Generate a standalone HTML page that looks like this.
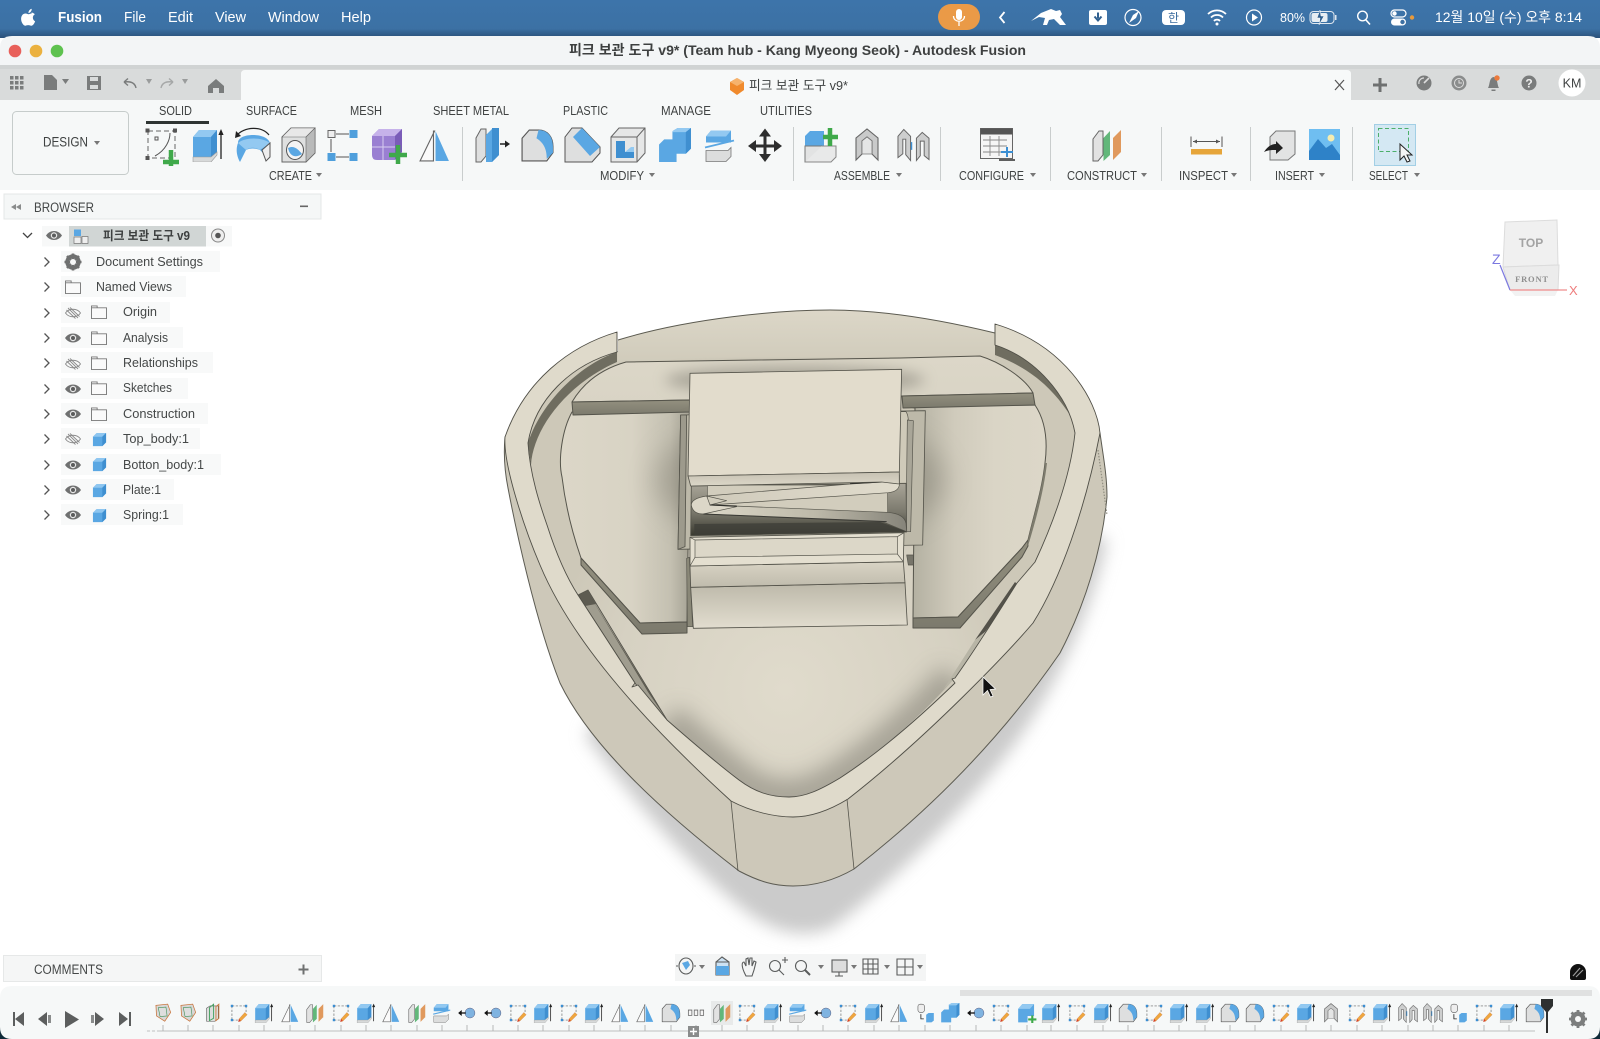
<!DOCTYPE html>
<html lang="ko"><head><meta charset="utf-8"><title>Autodesk Fusion</title>
<style>
html,body{margin:0;padding:0;background:#fff;width:1600px;height:1039px;overflow:hidden}
svg{display:block;filter:blur(.35px)}
text{font-family:"Liberation Sans","Noto Sans CJK KR",sans-serif;fill:#3f4242;font-size:12px}
.m{fill:#fff;font-size:14.5px}
.tab,.lab{font-size:12.5px}
.tr{font-size:12.5px;fill:#454848}
</style></head><body>
<svg width="1600" height="1039" viewBox="0 0 1600 1039" xmlns="http://www.w3.org/2000/svg">
<defs>
<linearGradient id="mb" x1="0" y1="0" x2="0" y2="1"><stop offset="0" stop-color="#3d74aa"/><stop offset=".75" stop-color="#3c71a4"/><stop offset="1" stop-color="#2a5079"/></linearGradient>
<linearGradient id="plL" gradientUnits="userSpaceOnUse" x1="560" y1="0" x2="690" y2="0"><stop offset="0" stop-color="#dcd7c8"/><stop offset=".55" stop-color="#d8d3c4"/><stop offset=".85" stop-color="#c4c0b1"/><stop offset="1" stop-color="#a5a294"/></linearGradient>
<linearGradient id="plR" gradientUnits="userSpaceOnUse" x1="915" y1="0" x2="1048" y2="0"><stop offset="0" stop-color="#b5b2a3"/><stop offset=".3" stop-color="#d0cbbc"/><stop offset=".6" stop-color="#dad5c6"/><stop offset="1" stop-color="#dcd7c8"/></linearGradient>
<linearGradient id="plT" x1="0" y1="0" x2="0" y2="1"><stop offset="0" stop-color="#dcd7c8"/><stop offset="1" stop-color="#d9d4c5"/></linearGradient>
<linearGradient id="lip" x1="0" y1="0" x2="0" y2="1"><stop offset="0" stop-color="#93907f"/><stop offset="1" stop-color="#7c7a6d"/></linearGradient>
<linearGradient id="bw" x1="0" y1="0" x2="0" y2="1"><stop offset="0" stop-color="#dcd7c8"/><stop offset="1" stop-color="#d0cbbb"/></linearGradient>
<linearGradient id="front" x1="0" y1="0" x2="0" y2="1"><stop offset="0" stop-color="#c6c1b2"/><stop offset="1" stop-color="#dcd7c8"/></linearGradient>
<linearGradient id="front2" x1="0" y1="0" x2="0" y2="1"><stop offset="0" stop-color="#bcb8a9"/><stop offset="1" stop-color="#e2ddcf"/></linearGradient>
<linearGradient id="front3" x1="0" y1="0" x2="0" y2="1"><stop offset="0" stop-color="#d9d4c5"/><stop offset="1" stop-color="#bfbbac"/></linearGradient>
<linearGradient id="dk" x1="0" y1="0" x2="0" y2="1"><stop offset="0" stop-color="#aaa699"/><stop offset=".55" stop-color="#7a786c"/><stop offset="1" stop-color="#39392f"/></linearGradient>
<linearGradient id="rib1" x1="0" y1="0" x2="1" y2="0"><stop offset="0" stop-color="#cfcaba"/><stop offset=".5" stop-color="#d9d4c5"/><stop offset="1" stop-color="#e0dbcc"/></linearGradient>
<linearGradient id="rib2" x1="0" y1="0" x2="1" y2="0"><stop offset="0" stop-color="#dcd7c8"/><stop offset=".55" stop-color="#bdb9a9"/><stop offset="1" stop-color="#86847a"/></linearGradient>
<radialGradient id="floor" gradientUnits="userSpaceOnUse" cx="785" cy="690" r="240"><stop offset="0" stop-color="#e0dbcc"/><stop offset=".7" stop-color="#d6d1c2"/><stop offset="1" stop-color="#cdc8b8"/></radialGradient>
<filter id="bS" x="-30%" y="-30%" width="160%" height="160%"><feGaussianBlur stdDeviation="8"/></filter>
<filter id="bA" x="-30%" y="-30%" width="160%" height="160%"><feGaussianBlur stdDeviation="7"/></filter>
<filter id="bF" x="-30%" y="-30%" width="160%" height="160%"><feGaussianBlur stdDeviation="11"/></filter>
<filter id="bB" x="-40%" y="-40%" width="180%" height="180%"><feGaussianBlur stdDeviation="14"/></filter>
<clipPath id="fc"><path d="M617 352L995 345C1035 358 1068 395 1075 433C1070 480 1050 530 1035 562L1017 583C1000 610 975 650 955 678C920 717 880 752 840 778C820 790 805 797 789 797C770 797 755 792 739 780C715 762 690 740 667 720L578 595C565 575 555 550 547 525C540 505 530 475 528 443C535 400 570 365 617 352Z"/></clipPath>

<symbol id="ex" viewBox="0 0 34 34"><path d="M2 9L8 2H26V25L20 31H2Z" fill="#5aa7e3"/><path d="M2 9L8 2H26L20 9Z" fill="#93c9f1"/><path d="M20 9L26 2V25L20 29Z" fill="#3f8fd0"/><path d="M2 29H20L26 24V27L20 34H2Z" fill="#d7d9d9" stroke="#9a9a9a" stroke-width=".6"/><path d="M30 31V5" stroke="#222" stroke-width="1.3"/><path d="M30 1l-2.600 6h5.200z" fill="#222"/></symbol>
<symbol id="sk" viewBox="0 0 34 34"><path d="M5 5H29M5 5V29M5 29H15M29 5V16" fill="none" stroke="#666" stroke-width="1.100" stroke-dasharray="4 2.400"/><rect x="3" y="3" width="4" height="4" fill="#3b8ed2"/><rect x="27" y="3" width="4" height="4" fill="#3b8ed2"/><rect x="3" y="27" width="4" height="4" fill="#3b8ed2"/><path d="M16 32l1-5L27 16l4 4L20 31z" fill="#efa63e" stroke="#a66" stroke-width=".4"/><path d="M16 32l1-5 3 3z" fill="#d83a2c"/></symbol>
<symbol id="tri" viewBox="0 0 34 34"><path d="M17 3L3 32H16V3Z" fill="#fafafa" stroke="#666" stroke-width="1.100"/><path d="M18 3V32H31Z" fill="#5aa7e3"/></symbol>
<symbol id="con" viewBox="0 0 34 34"><path d="M3 11L9 3H13V27L8 33H3Z" fill="#e2e2e2" stroke="#666" stroke-width="1"/><path d="M13.500 10L20 3V27L13.500 33Z" fill="#62b77a"/><path d="M23 10L31 2V24L23 32Z" fill="#e0995d"/></symbol>
<symbol id="fil" viewBox="0 0 34 34"><path d="M2 10L9 2H18C27 2 32 9 32 18V24L26 32H2Z" fill="#dedfdf" stroke="#555" stroke-width="1.100"/><path d="M18 2C27 2 32 9 32 18V24L26 30C26 22 24 15 16 10Z" fill="#5aa7e3"/></symbol>
<symbol id="jt" viewBox="0 0 34 34"><circle cx="22" cy="17" r="8.500" fill="#7fb3e0" stroke="#557" stroke-width=".8"/><path d="M15 17H6" stroke="#111" stroke-width="2.200"/><path d="M2 17l6-5v10z" fill="#111"/></symbol>
<symbol id="spl" viewBox="0 0 34 34"><path d="M3 8L8 2H28V14H3Z" fill="#5aa7e3"/><path d="M3 8L8 2H28L23 8Z" fill="#93c9f1"/><path d="M2 19L31 12" stroke="#5aa7e3" stroke-width="1.800"/><path d="M3 22H25L28 19V28L23 33H3Z" fill="#dcdddd" stroke="#777" stroke-width=".8"/></symbol>
<symbol id="cmb" viewBox="0 0 34 34"><path d="M2 16L7 11H15V3L20 0H33V20L28 25H19V33H2Z" fill="#5aa7e3"/><path d="M15 3L20 0H33L28 4H15Z" fill="#93c9f1"/><path d="M28 4L33 0V20L28 25Z" fill="#3f8fd0"/></symbol>
<symbol id="asm" viewBox="0 0 34 34"><path d="M6 32V10L17 1L28 10V32L22 26V13L17 9L12 13V26Z" fill="#c9caca" stroke="#666" stroke-width="1.100"/><path d="M12 13L17 9L22 13V26L12 26Z" fill="#e4e5e5" stroke="#777" stroke-width=".8"/></symbol>
<symbol id="asm2" viewBox="0 0 34 34"><path d="M1 30V8L7 1L14 8V33L9 27V11H6V26Z" fill="#cdcece" stroke="#666"/><path d="M33 32V10L26 4L20 10V33L24 28V13H28V28Z" fill="#cdcece" stroke="#666"/><path d="M15 14V22" stroke="#3b8ed2" stroke-width="1.400"/></symbol>
<symbol id="seq" viewBox="0 0 34 34"><rect x="5" y="2" width="11" height="14" rx="4" fill="#eee" stroke="#555"/><path d="M10 19V27H15" fill="none" stroke="#222" stroke-width="1.400"/><path d="M19 20L23 17H32V30L28 33H19Z" fill="#5aa7e3"/></symbol>
<symbol id="new" viewBox="0 0 34 34"><path d="M2 10L9 2H29V22H18V33H2Z" fill="#5aa7e3"/><path d="M2 10L9 2H29L22 10Z" fill="#93c9f1"/><path d="M19 28H33M26 21V34" stroke="#3fa94a" stroke-width="3.600"/></symbol>
<symbol id="c1" viewBox="0 0 34 34"><path d="M5 4L25 2L30 16L20 31L6 22Z" fill="#d8d8d8" stroke="#c9763e" stroke-width="1.300"/><path d="M9 8L22 7L24 22L12 23Z" fill="#dedede" stroke="#3f8f55"/></symbol>
<symbol id="c2" viewBox="0 0 34 34"><path d="M6 9L12 5H26V27L20 31H6Z" fill="#ddd" stroke="#555"/><path d="M11 30V8L18 2V26Z" fill="none" stroke="#3f9f5b" stroke-width="1.500"/><path d="M22 30V6L27 2V26Z" fill="none" stroke="#d07a3c" stroke-width="1.500"/></symbol>
<symbol id="ddd" viewBox="0 0 34 34"><path d="M4 12h6v9H4zM14 12h6v9h-6zM24 12h6v9h-6z" fill="#f5f5f5" stroke="#666" stroke-width="1.300"/></symbol>
<symbol id="eye" viewBox="0 0 16 10"><path d="M0 5C4-1 12-1 16 5C12 11 4 11 0 5Z" fill="#6f7070"/><circle cx="8" cy="5" r="3.200" fill="#e8e8e8"/><circle cx="8" cy="5" r="2" fill="#5b5c5c"/></symbol>
<symbol id="eyx" viewBox="0 0 16 12"><path d="M.5 6C4 1 12 1 15.500 6C12 11 4 11 .5 6Z" fill="none" stroke="#8a8a8a" stroke-width=".9"/><path d="M3 1L13 11M1.500 3L10.500 11.500M5 .5L14.500 9.500" stroke="#8a8a8a" stroke-width=".9"/></symbol>
<symbol id="fol" viewBox="0 0 17 15"><path d="M.5 1H6.500V3H16.500V14.500H.5ZM.5 3H6.500" fill="#fafafa" stroke="#777" stroke-width="1"/></symbol>
<symbol id="cub" viewBox="0 0 16 16"><path d="M1 5L5 1H15V11L11 15H1Z" fill="#5aa7e3"/><path d="M1 5L5 1H15L11 5Z" fill="#8ec6f0"/><path d="M11 5L15 1V11L11 15Z" fill="#3f8fd0"/></symbol>
<symbol id="chv" viewBox="0 0 8 12"><path d="M1.500 1.500L6 6L1.500 10.500" fill="none" stroke="#555" stroke-width="1.300"/></symbol>
</defs>

<rect width="1600" height="1039" fill="#fff"/>

<!-- macOS menu bar -->
<rect width="1600" height="38" fill="url(#mb)"/>
<path d="M31.600 13.500c-1.200 0-2.200.7-3 .7s-1.900-.7-3.100-.7c-2.300 0-4.400 2-4.400 5.400 0 3.300 2.300 6.800 4.100 6.800.9 0 1.500-.6 3-.6s2 .6 3.100.6c1.800 0 3.400-3 3.800-4.500-2.900-1.200-3-5.600-.2-6.900-.7-.5-1.900-1.800-3.300-1.800zM28.400 13c.1-2 1.500-3.800 3.300-4.200.2 2.200-1.400 4.200-3.300 4.200z" fill="#fff"/>
<text class="m" x="58" y="22" font-weight="700" textLength="44" lengthAdjust="spacingAndGlyphs">Fusion</text>
<text class="m" x="124" y="22" textLength="22" lengthAdjust="spacingAndGlyphs">File</text>
<text class="m" x="168" y="22" textLength="25" lengthAdjust="spacingAndGlyphs">Edit</text>
<text class="m" x="215" y="22" textLength="31" lengthAdjust="spacingAndGlyphs">View</text>
<text class="m" x="268" y="22" textLength="51" lengthAdjust="spacingAndGlyphs">Window</text>
<text class="m" x="341" y="22" textLength="30" lengthAdjust="spacingAndGlyphs">Help</text>
<rect x="938" y="4" width="42" height="26" rx="13" fill="#ea9a47"/>
<rect x="956" y="9" width="6" height="11" rx="3" fill="#fff"/><path d="M953.500 16c0 7 11 7 11 0M959 21.500V26" fill="none" stroke="#fff" stroke-width="1.300"/>
<path d="M1004.500 12L1000 17.500L1004.500 23" fill="none" stroke="#fff" stroke-width="1.800"/>
<path d="M1031 21L1041 13L1051 9L1056 11L1060 10L1062 14L1060 17L1066 25L1060 25L1054 19L1049 20L1047 25L1043 25L1045 18L1039 17Z" fill="#fff"/>
<rect x="1089" y="10" width="18" height="15" rx="2" fill="#fff"/><path d="M1098 12.500v6M1094.500 16.500L1098 20.500L1101.500 16.500" fill="none" stroke="#2f5f8f" stroke-width="2"/>
<circle cx="1133" cy="17.500" r="8" fill="none" stroke="#fff" stroke-width="1.200"/><path d="M1129 23L1133 15L1139 11L1136 18Z" fill="#fff"/>
<rect x="1162" y="10" width="23" height="15" rx="4" fill="#fff"/><text x="1173.500" y="22" text-anchor="middle" style="fill:#3d6d9f;font-size:12px">한</text>
<path d="M1208 14a13 13 0 0 1 18 0M1211 17.500a8.500 8.500 0 0 1 12 0M1214 21a4 4 0 0 1 6 0" fill="none" stroke="#fff" stroke-width="1.800"/><circle cx="1217" cy="24" r="1.500" fill="#fff"/>
<circle cx="1254" cy="17.500" r="7.500" fill="none" stroke="#fff" stroke-width="1.200"/><path d="M1252 13.500L1258 17.500L1252 21.500Z" fill="#fff"/>
<text class="m" x="1280" y="22" style="font-size:13px" textLength="25" lengthAdjust="spacingAndGlyphs">80%</text>
<rect x="1310" y="11.500" width="24" height="12" rx="3.500" fill="none" stroke="#dfe7ef" stroke-width="1"/><rect x="1311.500" y="13" width="16" height="9" rx="2" fill="#e6edf3"/><rect x="1335" y="15" width="1.500" height="5" fill="#dfe7ef"/><path d="M1320 10L1317 18H1320L1319 25L1324 16H1321Z" fill="#2f5f8f" stroke="#fff" stroke-width=".5"/>
<circle cx="1362.500" cy="16" r="4.800" fill="none" stroke="#fff" stroke-width="1.400"/><path d="M1366 20L1370 24.500" stroke="#fff" stroke-width="1.600"/>
<rect x="1391" y="10" width="15" height="7" rx="3.500" fill="none" stroke="#fff" stroke-width="1.200"/><circle cx="1394.500" cy="13.500" r="2.200" fill="#fff"/><rect x="1391" y="18.500" width="15" height="7" rx="3.500" fill="#fff"/><circle cx="1402.500" cy="22" r="2.200" fill="#3d70a3"/><circle cx="1412" cy="17.500" r="2.200" fill="#e89a3c"/>
<text class="m" x="1435" y="22" style="font-size:14px" textLength="147" lengthAdjust="spacingAndGlyphs">12월 10일 (수) 오후 8:14</text>

<!-- window chrome -->
<path d="M0 48Q0 36 12 36H1588Q1600 36 1600 48V190H0Z" fill="#f3f5f6"/>
<circle cx="15" cy="51" r="6.300" fill="#e8605a"/><circle cx="36" cy="51" r="6.300" fill="#ebb13f"/><circle cx="57" cy="51" r="6.300" fill="#5ec24f"/>
<text x="569" y="55" font-weight="700" style="font-size:14px;fill:#3e4040" textLength="457" lengthAdjust="spacingAndGlyphs">피크 보관 도구 v9* (Team hub - Kang Myeong Seok) - Autodesk Fusion</text>
<rect y="65" width="1600" height="4" fill="#d0d3d3"/>
<rect y="69" width="1600" height="31" fill="#d9dbdb"/>
<path d="M241 100V74Q241 70 245 70H1347Q1351 70 1351 74V100Z" fill="#f7f9f9"/>
<rect y="100" width="1600" height="90" fill="#f6f8f8"/>

<!-- tab row left icons -->
<g fill="#7a7c7c"><rect x="10" y="76" width="3.500" height="3.500"/><rect x="15" y="76" width="3.500" height="3.500"/><rect x="20" y="76" width="3.500" height="3.500"/><rect x="10" y="81" width="3.500" height="3.500"/><rect x="15" y="81" width="3.500" height="3.500"/><rect x="20" y="81" width="3.500" height="3.500"/><rect x="10" y="86" width="3.500" height="3.500"/><rect x="15" y="86" width="3.500" height="3.500"/><rect x="20" y="86" width="3.500" height="3.500"/>
<path d="M44 75H52L57 80V90H44Z"/><path d="M62 79h7l-3.500 5z"/>
<path d="M87 76H101V90H87ZM90 77V81H98V77ZM90 85V89H98V85Z" fill-rule="evenodd"/>
<path d="M146 79h6l-3 5zM182 79h6l-3 5z" fill="#9a9c9c"/>
<path d="M208 86L216 79L224 86V93H219V88H213V93H208Z"/></g>
<path d="M136 88C135 83 131 81 124 82M124 82l4-3.500M124 82l4 3.500" fill="none" stroke="#7a7c7c" stroke-width="1.400"/>
<path d="M161 88C162 83 166 81 173 82M173 82l-4-3.500M173 82l-4 3.500" fill="none" stroke="#a6a8a8" stroke-width="1.400"/>

<path d="M730 82L737 78L744 82V90L737 95L730 90Z" fill="#f08a2c"/><path d="M730 82L737 78L744 82L737 86Z" fill="#f6b36d"/>
<text x="749" y="90" style="font-size:13px" textLength="99" lengthAdjust="spacingAndGlyphs">피크 보관 도구 v9*</text>
<path d="M1335 80L1344 90M1344 80L1335 90" stroke="#555" stroke-width="1.200"/>
<path d="M1380 78V92M1373 85H1387" stroke="#6e7070" stroke-width="3"/>
<circle cx="1424" cy="83" r="7.500" fill="#7a7c7c"/><path d="M1424 83L1429 78" stroke="#ddd" stroke-width="1.600"/><path d="M1419 84a5 5 0 0 1 5-6" fill="none" stroke="#ddd" stroke-width="1.200"/>
<circle cx="1459" cy="83" r="7.500" fill="#8a8c8c"/><circle cx="1459" cy="83" r="4.500" fill="none" stroke="#ddd"/><path d="M1459 80V83H1462" stroke="#ddd" fill="none"/>
<path d="M1488 88C1490 85 1489 78 1493.500 77C1498 78 1497 85 1499 88ZM1491.500 89.500H1495.500V91H1491.500Z" fill="#7a7c7c"/><circle cx="1497" cy="78" r="2.700" fill="#ec7a3c"/>
<circle cx="1529" cy="83" r="7.500" fill="#7a7c7c"/><text x="1529" y="87.500" text-anchor="middle" font-weight="700" style="fill:#eee;font-size:12px">?</text>
<circle cx="1572" cy="83" r="13.500" fill="#fff"/><text x="1572" y="87.500" text-anchor="middle" style="font-size:12.500px">KM</text>

<!-- ribbon tabs -->
<text class="tab" x="159" y="115" textLength="33" lengthAdjust="spacingAndGlyphs">SOLID</text>
<text class="tab" x="246" y="115" textLength="51" lengthAdjust="spacingAndGlyphs">SURFACE</text>
<text class="tab" x="350" y="115" textLength="32" lengthAdjust="spacingAndGlyphs">MESH</text>
<text class="tab" x="433" y="115" textLength="76" lengthAdjust="spacingAndGlyphs">SHEET METAL</text>
<text class="tab" x="563" y="115" textLength="45" lengthAdjust="spacingAndGlyphs">PLASTIC</text>
<text class="tab" x="661" y="115" textLength="50" lengthAdjust="spacingAndGlyphs">MANAGE</text>
<text class="tab" x="760" y="115" textLength="52" lengthAdjust="spacingAndGlyphs">UTILITIES</text>
<rect x="146" y="121" width="63" height="3" fill="#2f3533"/>

<rect x="12.500" y="111.500" width="116" height="63" rx="4" fill="#f6f8f8" stroke="#c6cccb"/>
<text x="43" y="146.500" style="font-size:13.500px" textLength="45" lengthAdjust="spacingAndGlyphs">DESIGN</text>
<path d="M94 141h6l-3 4z" fill="#777"/>

<!-- ribbon icons -->
<g>
<path d="M148 131H175V158H148Z" fill="none" stroke="#666" stroke-dasharray="5 3"/><path d="M155 156C166 150 170 140 170 133" fill="none" stroke="#555"/><g fill="#555"><rect x="145.500" y="128.500" width="4" height="4"/><rect x="173" y="128.500" width="4" height="4"/><rect x="145.500" y="156" width="4" height="4"/></g><rect x="155" y="137" width="3" height="3" fill="none" stroke="#555"/><path d="M163 162H179M171 150V166" stroke="#3fa94a" stroke-width="4.500"/>
<use href="#ex" x="191" y="128" width="34" height="34"/>
<path d="M238 143C238 137 246 135 253 135C260 135 268 137 270 143L268 158L260 150C255 148 250 148 246 150L240 162C236 155 236 148 238 143Z" fill="#5aa7e3"/><path d="M238 143C245 137 262 137 270 143L260 150C255 147 250 147 246 150Z" fill="#93c9f1"/><path d="M262 150L270 143V157L266 161Z" fill="#eee" stroke="#555"/><path d="M236 136C245 126 262 126 269 135" fill="none" stroke="#222" stroke-width="1.200"/><path d="M236 131l-1 7 6-2z" fill="#222"/>
<path d="M282 137L291 128H315V153L306 162H282Z" fill="#dfe0e0" stroke="#666"/><path d="M282 137L291 128H315L306 137Z" fill="#e8e8e8" stroke="#666" stroke-width=".6"/><path d="M306 137L315 128V153L306 162Z" fill="#b9baba" stroke="#666" stroke-width=".6"/><ellipse cx="295" cy="150" rx="8.500" ry="9.500" fill="#f4f4f4" stroke="#555"/><path d="M288 148C290 157 296 158 302 154C298 149 294 145 288 148Z" fill="#5aa7e3"/>
<rect x="328" y="130.500" width="7" height="7" fill="#eee" stroke="#666"/><rect x="349.500" y="130" width="8" height="8" fill="#4f9fdc"/><rect x="327.500" y="153" width="8" height="8" fill="#4f9fdc"/><rect x="349.500" y="153" width="8" height="8" fill="#4f9fdc"/><path d="M336 134H349M331 139V152M336 157H349" stroke="#555"/>
<path d="M372 136L379 129H402V152L395 160H377Q372 160 372 155Z" fill="#9a7fd2"/><path d="M372 136L379 129H402L395 136Z" fill="#c6b2ea"/><path d="M395 136L402 129V152L395 160Z" fill="#7a5cb8"/><path d="M383 136V160M372 147H395" stroke="#d8ccf0" stroke-width="1"/><path d="M389 155H407M398 145V164" stroke="#3fa94a" stroke-width="4.500"/>
<use href="#tri" x="417" y="128" width="35" height="35"/>
<path d="M476 138L481 129H486V156L481 162H476Z" fill="#dedfdf" stroke="#666"/><path d="M486 135L493 128H499V155L492 162H486Z" fill="#5aa7e3"/><path d="M492 128H499V155L492 162Z" fill="#3f8fd0"/><path d="M500 144H506" stroke="#222" stroke-width="1.500"/><path d="M510 144l-5-3.500v7z" fill="#222"/>
<use href="#fil" x="520" y="128" width="35" height="35"/>
<path d="M565 137L572 128H582L600 147V153L592 162H565Z" fill="#dedfdf" stroke="#555" stroke-width="1"/><path d="M582 128L600 147L590 156L573 137Z" fill="#5aa7e3"/>
<path d="M611 137L619 128H645V153L637 162H611Z" fill="#e6e7e7" stroke="#666"/><path d="M611 137H637L645 128M637 137V162" fill="none" stroke="#666"/><path d="M616 141H625V152H634V158H616Z" fill="#3f8fd0"/><path d="M625 152L631 147H634V152Z" fill="#93c9f1"/>
<use href="#cmb" x="657" y="128" width="35" height="35"/>
<use href="#spl" x="703" y="128" width="34" height="35"/>
<path d="M765 132V160M751 146H779" stroke="#2e2e2e" stroke-width="3"/><path d="M765 128.500l-6 8h12zM765 162l-6-8h12zM748 146l8-6v12zM782 146l-8-6v12z" fill="#2e2e2e"/>
<path d="M805 136L810 131H824V162H805Z" fill="#5aa7e3"/><path d="M805 146H822V162H805Z" fill="#e2e3e3" stroke="#777"/><path d="M822 146H836V157L831 162H805" fill="#e8e9e9" stroke="#888"/><path d="M823 137H838M830 128V146" stroke="#3fa94a" stroke-width="4.500"/>
<use href="#asm" x="850" y="128" width="34" height="34"/>
<use href="#asm2" x="897" y="128" width="33" height="34"/>
<rect x="980.500" y="128.500" width="32" height="30" fill="#f5f5f5" stroke="#666"/><rect x="980.500" y="128.500" width="32" height="6" fill="#555"/><path d="M983 140H1007M983 146H1007M983 152H1004M990 136V156M999 136V156" stroke="#888" stroke-width=".9"/><path d="M1001 152H1013M1007 147V157" stroke="#3b8ed2" stroke-width="2"/><path d="M999 160H1015" stroke="#444" stroke-width="1.700"/>
<use href="#con" x="1090" y="128" width="34" height="34"/>
<rect x="1191" y="149" width="31" height="5.500" fill="#e6a53a"/><path d="M1191 136.500V147M1222 136.500V147M1193 141.500H1220" stroke="#555" stroke-width="1"/><path d="M1193 141.500l4-2v4zM1220 141.500l-4-2v4z" fill="#555"/>
<path d="M1270 137L1276 131H1295V154L1288 160H1270Z" fill="#e2e3e3" stroke="#777"/><path d="M1264 152C1268 146 1272 144 1276 144V141L1283 148L1276 154V150C1272 150 1268 150 1264 152Z" fill="#222"/>
<rect x="1309" y="129" width="31" height="31" fill="#6fbef1"/><path d="M1309 160V151L1318 139L1326 148L1332 144L1340 155V160Z" fill="#2e82c8"/><circle cx="1331" cy="138" r="3.500" fill="#f5ecb0"/>
<rect x="1374.500" y="124.500" width="41" height="41" fill="#d4e8f3" stroke="#a2cfe5"/><rect x="1378.500" y="128.500" width="30" height="23" fill="none" stroke="#4caf6a" stroke-dasharray="4 2.500"/><path d="M1400 144V160L1404 156L1407 162L1410 161L1407 155L1412 155Z" fill="#f5f5f5" stroke="#222"/>
</g>

<!-- group labels & separators -->
<g>
<text class="lab" x="269" y="180" textLength="43" lengthAdjust="spacingAndGlyphs">CREATE</text><path d="M316 173h6l-3 4z" fill="#777"/>
<text class="lab" x="600" y="180" textLength="44" lengthAdjust="spacingAndGlyphs">MODIFY</text><path d="M649 173h6l-3 4z" fill="#777"/>
<text class="lab" x="834" y="180" textLength="56" lengthAdjust="spacingAndGlyphs">ASSEMBLE</text><path d="M896 173h6l-3 4z" fill="#777"/>
<text class="lab" x="959" y="180" textLength="65" lengthAdjust="spacingAndGlyphs">CONFIGURE</text><path d="M1030 173h6l-3 4z" fill="#777"/>
<text class="lab" x="1067" y="180" textLength="70" lengthAdjust="spacingAndGlyphs">CONSTRUCT</text><path d="M1141 173h6l-3 4z" fill="#777"/>
<text class="lab" x="1179" y="180" textLength="49" lengthAdjust="spacingAndGlyphs">INSPECT</text><path d="M1231 173h6l-3 4z" fill="#777"/>
<text class="lab" x="1275" y="180" textLength="39" lengthAdjust="spacingAndGlyphs">INSERT</text><path d="M1319 173h6l-3 4z" fill="#777"/>
<text class="lab" x="1369" y="180" textLength="39" lengthAdjust="spacingAndGlyphs">SELECT</text><path d="M1414 173h6l-3 4z" fill="#777"/>
<path d="M462.500 127V181M793.500 127V181M940.500 127V181M1050.500 127V181M1161.500 127V181M1250.500 127V181M1352.500 127V181" stroke="#c9cdcd"/>
</g>

<!-- browser -->
<rect x="4" y="194" width="317" height="25" fill="#f5f7f7" stroke="#e4e7e7"/>
<path d="M11 207l5-3v6zM16 207l5-3v6z" fill="#8a8c8c"/>
<text x="34" y="212" style="font-size:13.500px;fill:#454848" textLength="60" lengthAdjust="spacingAndGlyphs">BROWSER</text>
<rect x="300" y="205.500" width="8" height="1.600" fill="#666"/>

<rect x="42" y="226" width="190" height="20.500" fill="#f7f8f8"/>
<rect x="69" y="226" width="137" height="20.500" fill="#d1d6d5"/>
<path d="M23 233L27.500 237.500L32 233" fill="none" stroke="#444" stroke-width="1.300"/>
<use href="#eye" x="46" y="230.500" width="16" height="10"/>
<path d="M74 229.500H81V236H74Z" fill="#5aa7e3"/><path d="M74 237H81V243.500H74Z" fill="#eee" stroke="#777" stroke-width=".7"/><path d="M82 236.500H88V243.500H82Z" fill="#eee" stroke="#777" stroke-width=".7"/>
<text x="103" y="240" font-weight="700" style="font-size:12.500px;fill:#3d4040" textLength="87" lengthAdjust="spacingAndGlyphs">피크 보관 도구 v9</text>
<circle cx="218" cy="235.500" r="6.500" fill="#eee" stroke="#888"/><circle cx="218" cy="235.500" r="2.800" fill="#555"/>

<g fill="#f8f9f9">
<rect x="61" y="251" width="159" height="21"/><rect x="61" y="276" width="125" height="21"/><rect x="61" y="302" width="109" height="21"/><rect x="61" y="327" width="122" height="21"/><rect x="61" y="352" width="152" height="21"/><rect x="61" y="378" width="127" height="21"/><rect x="61" y="403" width="147" height="21"/><rect x="61" y="428" width="139" height="21"/><rect x="61" y="454" width="160" height="21"/><rect x="61" y="479" width="113" height="21"/><rect x="61" y="504" width="122" height="21"/>
</g>
<g>
<use href="#chv" x="43" y="256" width="8" height="12"/><use href="#chv" x="43" y="281" width="8" height="12"/><use href="#chv" x="43" y="307" width="8" height="12"/><use href="#chv" x="43" y="332" width="8" height="12"/><use href="#chv" x="43" y="357" width="8" height="12"/><use href="#chv" x="43" y="383" width="8" height="12"/><use href="#chv" x="43" y="408" width="8" height="12"/><use href="#chv" x="43" y="433" width="8" height="12"/><use href="#chv" x="43" y="459" width="8" height="12"/><use href="#chv" x="43" y="484" width="8" height="12"/><use href="#chv" x="43" y="509" width="8" height="12"/>
</g>
<circle cx="73" cy="262" r="5.800" fill="none" stroke="#6f7070" stroke-width="3.800"/><path d="M73 253.500V270.500M64.500 262H81.500M67 256L79 268M79 256L67 268" stroke="#6f7070" stroke-width="2.600"/><circle cx="73" cy="262" r="3" fill="#f8f9f9"/>
<use href="#fol" x="65" y="280" width="16" height="14"/>
<use href="#eyx" x="65" y="307" width="16" height="12"/><use href="#eye" x="65" y="333" width="16" height="10"/><use href="#eyx" x="65" y="358" width="16" height="12"/><use href="#eye" x="65" y="384" width="16" height="10"/><use href="#eye" x="65" y="409" width="16" height="10"/><use href="#eyx" x="65" y="433" width="16" height="12"/><use href="#eye" x="65" y="460" width="16" height="10"/><use href="#eye" x="65" y="485" width="16" height="10"/><use href="#eye" x="65" y="510" width="16" height="10"/>
<use href="#fol" x="91" y="305" width="16" height="14"/><use href="#fol" x="91" y="331" width="16" height="14"/><use href="#fol" x="91" y="356" width="16" height="14"/><use href="#fol" x="91" y="381" width="16" height="14"/><use href="#fol" x="91" y="407" width="16" height="14"/>
<use href="#cub" x="92" y="432" width="15" height="15"/><use href="#cub" x="92" y="457" width="15" height="15"/><use href="#cub" x="92" y="483" width="15" height="15"/><use href="#cub" x="92" y="508" width="15" height="15"/>
<text class="tr" x="96" y="266" textLength="107" lengthAdjust="spacingAndGlyphs">Document Settings</text>
<text class="tr" x="96" y="291" textLength="76" lengthAdjust="spacingAndGlyphs">Named Views</text>
<text class="tr" x="123" y="316" textLength="34" lengthAdjust="spacingAndGlyphs">Origin</text>
<text class="tr" x="123" y="342" textLength="45" lengthAdjust="spacingAndGlyphs">Analysis</text>
<text class="tr" x="123" y="367" textLength="75" lengthAdjust="spacingAndGlyphs">Relationships</text>
<text class="tr" x="123" y="392" textLength="49" lengthAdjust="spacingAndGlyphs">Sketches</text>
<text class="tr" x="123" y="418" textLength="72" lengthAdjust="spacingAndGlyphs">Construction</text>
<text class="tr" x="123" y="443" textLength="66" lengthAdjust="spacingAndGlyphs">Top_body:1</text>
<text class="tr" x="123" y="469" textLength="81" lengthAdjust="spacingAndGlyphs">Botton_body:1</text>
<text class="tr" x="123" y="494" textLength="38" lengthAdjust="spacingAndGlyphs">Plate:1</text>
<text class="tr" x="123" y="519" textLength="46" lengthAdjust="spacingAndGlyphs">Spring:1</text>

<!-- viewcube -->
<g>
<path d="M1505 222L1557 220L1558 265L1503 267Z" fill="#f0f0f0" stroke="#dcdcdc"/>
<path d="M1503 267L1559 265L1558 290L1510 290Z" fill="#ececec" stroke="#dcdcdc"/>
<path d="M1510 290L1558 290L1555 296L1515 296Z" fill="#e5e5e5" opacity=".5"/>
<text x="1531" y="247" text-anchor="middle" font-weight="700" style="font-size:12px;fill:#a3a3a3">TOP</text>
<text x="1532" y="282" text-anchor="middle" font-weight="700" style="font-family:'Liberation Serif',serif;font-size:8.500px;fill:#8f8f8f;letter-spacing:.8px">FRONT</text>
<path d="M1500 265L1510 290" stroke="#7b78e0" stroke-width="1.200"/><path d="M1510 290H1567" stroke="#ef8d8d" stroke-width="1.200"/>
<text x="1492" y="264" style="font-size:14px;fill:#7b78e0">Z</text><text x="1569" y="295" style="font-size:13px;fill:#ee7d7d">X</text>
</g>

<!-- 3D model -->
<g stroke-linejoin="round">
<!-- shadow -->
<path d="M1107 540C1095 600 1062 680 1012 748C960 815 890 885 832 928C800 940 770 932 738 905C690 865 640 810 585 735L700 600L1000 500Z" fill="#cbcbcb" filter="url(#bS)"/>
<!-- outer wall -->
<path d="M505 437C503 460 506 478 508 488C515 525 535 620 560 683C590 745 660 810 739 871C760 882 775 886 793 886C815 886 835 880 854 869C930 810 1000 740 1060 653C1085 605 1102 550 1107 497C1107 475 1103 455 1100 433L995 345L617 352Z" fill="#cdc8b9" stroke="#5c5b52" stroke-width="1"/>
<path d="M1098 450L1107 515" stroke="#8f8d80" stroke-width="1.200" stroke-dasharray="1.500 1.500"/>
<!-- floor -->
<path d="M617 352L995 345C1035 358 1068 395 1075 433C1070 480 1050 530 1035 562L1017 583C1000 610 975 650 955 678C920 717 880 752 840 778C820 790 805 797 789 797C770 797 755 792 739 780C715 762 690 740 667 720L578 595C565 575 555 550 547 525C540 505 530 475 528 443C535 400 570 365 617 352Z" fill="url(#floor)"/>
<g clip-path="url(#fc)">
<path d="M667 720C690 740 715 762 739 780C755 792 770 797 789 797C805 797 820 790 840 778C880 752 920 717 955 678" fill="none" stroke="#77756a" stroke-width="36" opacity=".5" filter="url(#bF)"/>
<path d="M700 633H900" stroke="#9a9788" stroke-width="12" opacity=".25" filter="url(#bA)"/>
</g>
<path d="M618 340C690 318 780 310 830 310C890 310 950 322 995 333V362H618Z" fill="url(#bw)"/>
<path d="M618 340C690 318 780 310 830 310C890 310 950 322 995 333" fill="none" stroke="#5b5a50"/>
<!-- channel -->
<path d="M617 352C577 366 540 405 528 443L531 465C533 430 565 385 617 362Z" fill="#6f6d60"/>
<path d="M995 345C1035 358 1068 395 1075 433V423C1057 393 1035 370 995 355Z" fill="#6f6d60"/>
<!-- shelves -->
<path d="M572 412C562 430 558 460 562 477C566 510 573 535 581 558L640 623L687 622L690 410Z" fill="url(#plL)" stroke="#55544b"/>
<path d="M581 558L640 623L687 622V633L642 634L581 565Z" fill="url(#lip)" stroke="#55544b"/>
<path d="M903 406L1035 405C1045 420 1048 440 1045 463C1042 490 1035 510 1028 540L1022 548L958 617L913 618L915 408Z" fill="url(#plR)" stroke="#55544b"/>
<path d="M1028 540L1022 548L958 617L913 618V628L960 628L1022 557L1028 546Z" fill="url(#lip)" stroke="#55544b"/>
<path d="M1045 463C1042 490 1035 510 1028 540V546C1036 520 1044 490 1047 463Z" fill="#7d7b6d"/>
<path d="M572 402C585 380 605 368 626 362L690 361L900 358L980 356C1000 362 1025 378 1033 393L902 396L688 400Z" fill="url(#plT)" stroke="#55544b"/>
<ellipse cx="795" cy="380" rx="130" ry="14" fill="#77756a" opacity=".5" filter="url(#bA)"/>
<path d="M572 402L690 400V412L573 415Z" fill="url(#lip)" stroke="#55544b"/>
<path d="M902 396L1033 393L1035 405L903 408Z" fill="url(#lip)" stroke="#55544b"/>
<ellipse cx="800" cy="480" rx="145" ry="65" fill="#67655a" opacity=".35" filter="url(#bB)"/>
<!-- slots -->
<path d="M578 595L588 590L667 720L640 690L635 683Z" fill="#a09d8f" stroke="#4f4e46" stroke-width=".8"/>
<path d="M578 595L588 590L596 604L585 606Z" fill="#5d5b51"/>
<path d="M590 596L667 720L648 692Z" fill="#5d5b51"/>
<path d="M1015 582L1019 586L985 632L975 640Z" fill="#54524a"/>
<path d="M975 640L985 632L955 678L943 690Z" fill="#b8b5a6"/>
<!-- rim -->
<path d="M617 332C570 346 525 380 505 437C503 465 525 530 540 565C565 625 620 700 731 801C752 812 775 817 793 817C812 817 830 810 848 799C930 735 1010 650 1033 623C1060 580 1085 510 1100 433C1097 400 1065 345 995 324V345C1035 358 1068 395 1075 433C1070 480 1050 530 1035 562L1017 583C1000 610 975 650 955 678L952 679L955 683C920 717 880 752 840 778C820 790 805 797 789 797C770 797 755 792 739 780C715 762 690 740 667 720L638 685L632 687L635 683L578 595C565 575 555 550 547 525C540 505 530 475 528 443C535 400 570 365 617 352Z" fill="#dfdacb" stroke="#4f4e46" stroke-width=".9"/>
<!-- seams -->
<path d="M731 801L738 871M847 799L854 869" stroke="#55544b" stroke-width=".8"/>
</g>

<!-- central block -->
<g transform="translate(650 360) scale(.33333)" stroke-linejoin="round" stroke="#55544b" stroke-width="2.500">
<path d="M92 165L826 152L818 555L84 568Z" fill="#bdb9a9"/>
<path d="M92 165L110 165L105 560L84 568Z" fill="#9d9a8c"/>
<path d="M768 155Q775 165 775 185L768 515L748 515L745 155Z" fill="#cfcab9" stroke-width="2"/>
<path d="M772 180L790 182L782 515L768 515Z" fill="#a9a698" stroke-width="2"/>
<path d="M124 378L768 370L770 516L122 527Z" fill="url(#dk)"/>
<path d="M172 375H713V457H172Z" fill="#d2cdbd" stroke-width="2"/>
<path d="M180 435L710 457Q762 460 768 490L770 515L700 486L160 462Z" fill="url(#rib2)" stroke-width="2"/>
<path d="M170 408Q124 415 124 435Q128 462 160 462L260 440L180 435Z" fill="#dcd7c8" stroke-width="2"/>
<path d="M170 408L600 372L700 366L748 345V375Q745 395 715 398L180 435L230 422Z" fill="url(#rib1)" stroke-width="2"/>
<path d="M180 435L260 438" fill="none" stroke="#2f2f2b" stroke-width="3"/>
<path d="M160 462L710 485" fill="none" stroke="#3a3a35" stroke-width="3"/>
<path d="M600 371L695 366" fill="none" stroke="#2f2f2b" stroke-width="3"/>
<path d="M133 492L690 486L770 515L133 525Z" fill="#3f3e38" opacity=".8" stroke="none"/>
<path d="M120 40L755 28L748 336L114 348Z" fill="#e2dccc"/>
<path d="M114 348L748 336V372L695 366L122 378Z" fill="url(#front)"/>
<path d="M110 595L118 592L128 800H112Z" fill="#8a8878" stroke-width="2"/>
<path d="M770 585H790V615H775Z" fill="#77756a" stroke-width="2"/>
<path d="M122 682L765 668L772 795L130 805Z" fill="url(#front2)"/>
<path d="M120 618L760 605L765 668L122 682Z" fill="url(#front3)"/>
<path d="M120 532L762 518L760 605L120 618Z" fill="#e4dfd0"/>
<path d="M135 540L742 530V582L135 592Z" fill="#dcd7c8" stroke-width="2"/>
<path d="M120 532L135 540M762 518L742 530M135 592L120 618M742 582L760 605" fill="none" stroke-width="2"/>
</g>

<!-- cursor -->
<path d="M983 677V695L987.500 690.500L990.500 697L993 696L990 689.500L995.500 689Z" fill="#111" stroke="#fff" stroke-width=".7"/>

<!-- comments -->
<rect x="3.500" y="955.500" width="318" height="26" fill="#f5f6f6" stroke="#e6e8e8"/>
<text x="34" y="974" style="font-size:13.500px;fill:#454848" textLength="69" lengthAdjust="spacingAndGlyphs">COMMENTS</text>
<path d="M303.500 964.500V974.500M298.500 969.500H308.500" stroke="#6e7070" stroke-width="2"/>

<!-- nav bar -->
<rect x="675" y="954" width="251" height="27" fill="#f4f5f5"/>
<g fill="none" stroke="#5a5c5c" stroke-width="1.100">
<ellipse cx="686" cy="966" rx="7" ry="8"/><path d="M678 966h-2M694 966h2"/>
<path d="M716 962H729V975H716ZM716 962L722 957L729 962" fill="#cde2f3"/>
<path d="M745 974C742 968 741 962 744 962L746 966V959L748 958L749 965L750 958L752 958L752 966L754 961L756 962L754 970L752 976H746Z"/>
<circle cx="775" cy="966" r="5.500"/><path d="M779 970L784 975M782 960H788M785 957V963"/>
<circle cx="801" cy="966" r="5.500"/><path d="M805 970L810 975" stroke-width="2"/>
<rect x="832" y="960" width="15" height="12" fill="#ddd"/><path d="M839 972V976M835 976H843"/>
<path d="M863 959H878V974H863ZM868 959V974M873 959V974M863 964H878M863 969H878"/>
<path d="M897 959H913V975H897ZM897 967H913M905 959V975"/>
</g>
<rect x="716" y="966" width="13" height="9" fill="#5aa7e3"/>
<path d="M682 963L688 961L690 965L686 970Z" fill="#5aa7e3"/>
<g fill="#777"><path d="M699 965h6l-3 4zM818 965h6l-3 4zM851 965h6l-3 4zM884 965h6l-3 4zM917 965h6l-3 4z"/></g>

<circle cx="1578" cy="972" r="8" fill="#111"/><rect x="1570" y="972" width="16" height="8" rx="2" fill="#111"/><path d="M1573 976L1580 968M1576 977L1583 970" stroke="#999" stroke-width="1.200"/>

<!-- timeline -->
<path d="M0 998Q0 986 12 986H1588Q1600 986 1600 998V1039H0Z" fill="#f6f8f8"/>
<path d="M0 1027V1039H12Q0 1039 0 1027ZM1600 1027V1039H1588Q1600 1039 1600 1027Z" fill="#0f2a38"/>
<rect x="960" y="990" width="632" height="6" fill="#e0e1e1"/>
<g fill="#5c5e5e">
<rect x="13" y="1012" width="2" height="14"/><path d="M24 1012V1026L15 1019Z"/>
<path d="M47 1012V1026L38 1019Z"/><rect x="48" y="1015" width="3" height="8" fill="#8a8c8c"/>
<path d="M65 1011V1028L79 1019.500Z"/>
<rect x="91" y="1015" width="3" height="8" fill="#8a8c8c"/><path d="M95 1012V1026L104 1019Z"/>
<path d="M119 1012V1026L128 1019Z"/><rect x="129" y="1012" width="2" height="14"/>
</g>
<path d="M145 1031H1535" stroke="#d0d2d2" stroke-width="1.600"/>
<path d="M145 1031H160" stroke="#f6f8f8" stroke-width="1.800" stroke-dasharray="2 3"/>
<path d="M163 1025v6M188 1025v6M213 1025v6M239 1025v6M264 1025v6M290 1025v6M315 1025v6M341 1025v6M366 1025v6M391 1025v6M417 1025v6M442 1025v6M467 1025v6M493 1025v6M518 1025v6M543 1025v6M569 1025v6M594 1025v6M620 1025v6M645 1025v6M671 1025v6M696 1025v6M722 1025v6M747 1025v6M773 1025v6M798 1025v6M823 1025v6M848 1025v6M874 1025v6M899 1025v6M925 1025v6M950 1025v6M976 1025v6M1001 1025v6M1027 1025v6M1051 1025v6M1077 1025v6M1103 1025v6M1128 1025v6M1154 1025v6M1179 1025v6M1205 1025v6M1230 1025v6M1255 1025v6M1281 1025v6M1306 1025v6M1331 1025v6M1357 1025v6M1382 1025v6M1408 1025v6M1433 1025v6M1458 1025v6M1484 1025v6M1509 1025v6" stroke="#b5b7b7" stroke-width="1"/>
<rect x="688" y="1026" width="11" height="11" fill="#8a8c8c"/><path d="M693.500 1028V1035M690 1031.500H697" stroke="#fff" stroke-width="1.400"/>
<rect x="711" y="1001" width="22" height="24" fill="#e8eaea"/>
<g>
<use href="#c1" x="153" y="1003" width="20" height="20"/><use href="#c1" x="178" y="1003" width="20" height="20"/><use href="#c2" x="203" y="1003" width="20" height="20"/><use href="#sk" x="229" y="1003" width="20" height="20"/><use href="#ex" x="254" y="1003" width="20" height="20"/><use href="#tri" x="280" y="1003" width="20" height="20"/><use href="#con" x="305" y="1003" width="20" height="20"/><use href="#sk" x="331" y="1003" width="20" height="20"/><use href="#ex" x="356" y="1003" width="20" height="20"/><use href="#tri" x="381" y="1003" width="20" height="20"/><use href="#con" x="407" y="1003" width="20" height="20"/><use href="#spl" x="432" y="1003" width="20" height="20"/><use href="#jt" x="457" y="1003" width="20" height="20"/><use href="#jt" x="483" y="1003" width="20" height="20"/><use href="#sk" x="508" y="1003" width="20" height="20"/><use href="#ex" x="533" y="1003" width="20" height="20"/><use href="#sk" x="559" y="1003" width="20" height="20"/><use href="#ex" x="584" y="1003" width="20" height="20"/><use href="#tri" x="610" y="1003" width="20" height="20"/><use href="#tri" x="635" y="1003" width="20" height="20"/><use href="#fil" x="661" y="1003" width="20" height="20"/><use href="#ddd" x="686" y="1003" width="20" height="20"/><use href="#con" x="712" y="1003" width="20" height="20"/><use href="#sk" x="737" y="1003" width="20" height="20"/><use href="#ex" x="763" y="1003" width="20" height="20"/><use href="#spl" x="788" y="1003" width="20" height="20"/><use href="#jt" x="813" y="1003" width="20" height="20"/><use href="#sk" x="838" y="1003" width="20" height="20"/><use href="#ex" x="864" y="1003" width="20" height="20"/><use href="#tri" x="889" y="1003" width="20" height="20"/><use href="#seq" x="915" y="1003" width="20" height="20"/><use href="#cmb" x="940" y="1003" width="20" height="20"/><use href="#jt" x="966" y="1003" width="20" height="20"/><use href="#sk" x="991" y="1003" width="20" height="20"/><use href="#new" x="1017" y="1003" width="20" height="20"/><use href="#ex" x="1041" y="1003" width="20" height="20"/><use href="#sk" x="1067" y="1003" width="20" height="20"/><use href="#ex" x="1093" y="1003" width="20" height="20"/><use href="#fil" x="1118" y="1003" width="20" height="20"/><use href="#sk" x="1144" y="1003" width="20" height="20"/><use href="#ex" x="1169" y="1003" width="20" height="20"/><use href="#ex" x="1195" y="1003" width="20" height="20"/><use href="#fil" x="1220" y="1003" width="20" height="20"/><use href="#fil" x="1245" y="1003" width="20" height="20"/><use href="#sk" x="1271" y="1003" width="20" height="20"/><use href="#ex" x="1296" y="1003" width="20" height="20"/><use href="#asm" x="1321" y="1003" width="20" height="20"/><use href="#sk" x="1347" y="1003" width="20" height="20"/><use href="#ex" x="1372" y="1003" width="20" height="20"/><use href="#asm2" x="1398" y="1003" width="20" height="20"/><use href="#asm2" x="1423" y="1003" width="20" height="20"/><use href="#seq" x="1448" y="1003" width="20" height="20"/><use href="#sk" x="1474" y="1003" width="20" height="20"/><use href="#ex" x="1499" y="1003" width="20" height="20"/><use href="#fil" x="1525" y="1003" width="20" height="20"/>
</g>
<path d="M1541 999H1553V1006L1548 1012V1033H1546V1012L1541 1006Z" fill="#2e3030"/>
<circle cx="1578" cy="1019" r="5.500" fill="none" stroke="#7c7e7e" stroke-width="4"/><path d="M1578 1010V1028M1569 1019H1587M1571.500 1012.500L1584.500 1025.500M1584.500 1012.500L1571.500 1025.500" stroke="#7c7e7e" stroke-width="2.800"/><circle cx="1578" cy="1019" r="3" fill="#f8f9f9"/>
</svg>
</body></html>
